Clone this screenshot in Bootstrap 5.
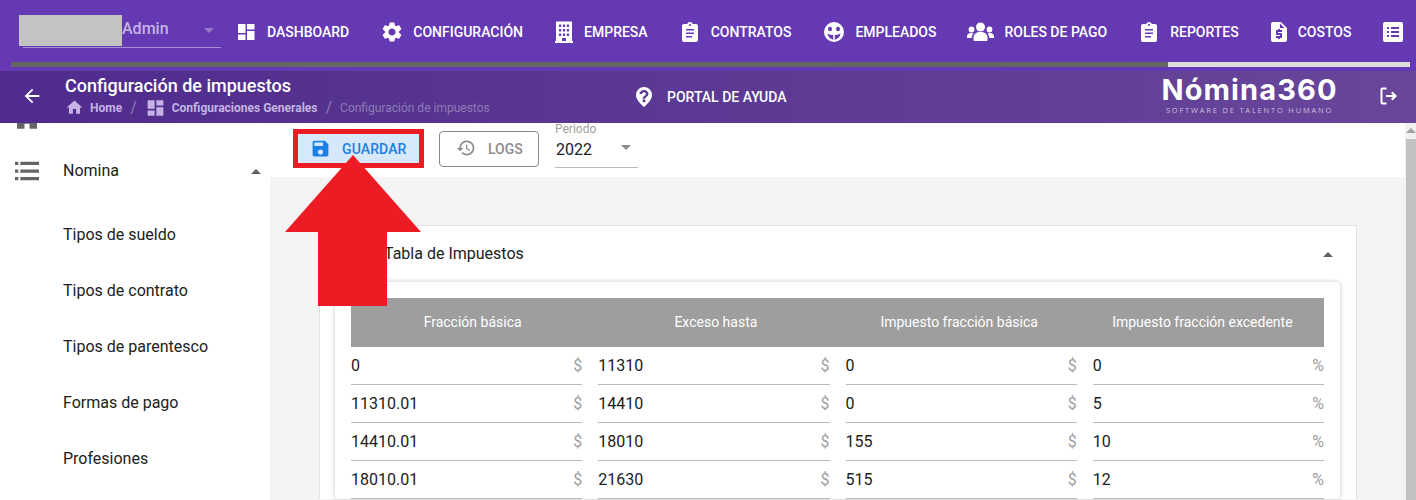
<!DOCTYPE html>
<html lang="es">
<head>
<meta charset="utf-8">
<title>Configuración de impuestos</title>
<link href="https://cdn.jsdelivr.net/npm/bootstrap@5.3.0/dist/css/bootstrap.min.css" rel="stylesheet">
<style>
html,body{height:500px;overflow:hidden;}
body{font-family:Roboto,"Liberation Sans",sans-serif;background:#f4f4f4;color:#212121;width:1416px;}
svg{display:block;flex:none;fill:currentColor;}
.top{background:#6539b3;height:71px;color:#fff;}
.top-row{height:62px;}
.user{width:198px;height:33px;margin:15px 0 0 23px;border-bottom:1px solid #a68fd6;color:#c4b3e4;font-size:16px;font-weight:500;}
.redact{width:103px;height:31px;background:#c3c3c3;margin-left:-4px;}
.user-name{line-height:28px;}
.caret{width:0;height:0;border-left:5px solid transparent;border-right:5px solid transparent;border-top:5px solid currentColor;}
.caret.up{border-top:0;border-bottom:5px solid currentColor;}
.user .caret{margin:13px 7px 0 auto;color:#9478cc;}
.menu{margin-left:13px;margin-top:20px;gap:30px;font-size:14px;font-weight:500;line-height:20px;}
.menu-item{gap:9px;white-space:nowrap;}
.menu-item:nth-child(2){margin-left:1px;}
.menu-item:nth-child(3){margin-left:-1px;gap:8px;}
.menu-item:nth-child(5){margin-left:1px;}
.menu-item.tight{gap:7px;margin-left:-2px;}
.scroll-x{height:5px;margin:0 6px 0 11px;border-radius:0;background:#ddd;}
.scroll-x .progress-bar{background:#666;}
.sub{height:52px;background:linear-gradient(90deg,#4f2c8d,#68469a);color:#fff;}
.back{width:65px;padding-left:21px;margin-bottom:2px;}
.sub-title{width:571px;align-self:flex-start;}
.sub-title h1{font-size:18px;font-weight:500;line-height:22px;margin:4px 0 1px;}
.breadcrumb{--bs-breadcrumb-margin-bottom:0;--bs-breadcrumb-divider-color:#8f7bb5;--bs-breadcrumb-item-active-color:#8f7bb5;--bs-breadcrumb-item-padding-x:8px;font-size:12px;line-height:18px;font-weight:700;}
.breadcrumb-item{display:flex;align-items:center;}
.breadcrumb a{color:#c4b3e4;text-decoration:none;gap:6px;}
.breadcrumb-item+.breadcrumb-item::before{font-size:16px;font-weight:400;line-height:18px;}
.breadcrumb .active{font-weight:400;}
.help{width:524px;gap:13px;font-size:14px;font-weight:500;margin-left:-2px;margin-right:2px;}
.logo{width:179px;text-align:center;line-height:1;margin-top:-3px;}
.logo b{display:block;font-family:Inter,sans-serif;font-size:29px;font-weight:700;letter-spacing:1.1px;line-height:28px;white-space:nowrap;}
.logo span{display:block;font-size:7.5px;letter-spacing:1.8px;line-height:10px;margin-top:1px;color:#c9bfdc;font-family:"Open Sans",sans-serif;white-space:nowrap;}
.logout{margin-left:37px;margin-bottom:2px;}
.main{height:377px;overflow:hidden;}
.side{width:270px;background:#fff;flex:none;overflow:hidden;font-size:16px;}
.side-list{margin-top:-36px;}
.side-row{height:56px;padding-left:63px;}
.side-ico{width:48px;margin-left:-60px;margin-right:12px;color:#666;}
.side-row .caret{margin-left:auto;margin-right:9px;color:#616161;}
.sub-list{padding-top:8px;}
.content{width:1135px;flex:none;}
.toolbar{height:54px;background:#fff;padding-left:23px;}
.btn-save{width:131px;height:39px;margin-top:6px;border:5px solid #ed1c24;background:#d6e8fa;color:#1a80e5;border-radius:0;padding:1px 0 0 12px;font-size:14px;font-weight:500;gap:11px;letter-spacing:.1px;}
.btn-save svg{margin-top:-2px;}
.btn-logs{width:100px;height:36px;margin:8px 0 0 15px;border:1px solid #8a8a8a;border-radius:4px;color:#8c8c8c;padding:1px 0 0 16px;gap:12px;font-size:14px;font-weight:500;}
.btn-logs svg{margin-top:-3px;}
.periodo{width:83px;height:45px;margin-left:16px;border-bottom:1px solid #bbb;}
.periodo small{display:block;font-size:12px;line-height:12px;color:#9e9e9e;}
.periodo .val{font-size:16px;line-height:26px;margin-top:2px;padding-left:1px;}
.periodo .caret{margin:-18px 7px 0 auto;color:#8a8a8a;}
.area{padding:48px 48px 0 49px;}
.panel{border:1px solid #e3e3e3;border-bottom:0;border-radius:0;background:#fff;}
.panel-head{height:56px;padding:0 23px 0 64px;font-size:16px;}
.panel-head .caret{color:#616161;}
.inner{margin:0 16px 0 15px;padding:16px 16px 0;border-radius:4px;background:#fff;box-shadow:0 0 5px rgba(0,0,0,.22);}
.thead{background:#9e9e9e;color:#fff;height:49px;font-size:14px;text-align:center;}
.cell{height:38px;border-bottom:1px solid #bbb;font-size:16px;padding-top:1px;}
.cell i{font-style:normal;color:#9e9e9e;}
.vbar{width:11px;flex:none;background:#f1f1f1;padding-top:5px;}
.vbar .caret{margin:0 auto 6px;color:#a3a3a3;}
.vbar div:last-child{height:100%;background:#c1c1c1;margin-left:.5px;}
.stage{position:relative;}
.arrow{position:absolute;left:285px;top:32px;fill:#ed1c24;}
</style>
</head>
<body>
<header class="top">
  <div class="top-row d-flex align-items-start">
    <div class="user d-flex flex-none">
      <div class="redact"></div><div class="user-name">Admin</div><div class="caret"></div>
    </div>
    <nav class="menu d-flex align-items-center">
      <a class="menu-item d-flex align-items-center text-white text-decoration-none" href="#"><svg width="24" height="24" viewBox="0 0 24 24"><path d="M4 13h7.500V4H4v9zm0 7h7.500v-5.500H4V20zm9 0h7.500V11H13v9zm0-16v5.500h7.500V4H13z"/></svg>DASHBOARD</a>
      <a class="menu-item d-flex align-items-center text-white text-decoration-none" href="#"><svg width="24" height="24" viewBox="0 0 24 24"><path d="M19.140 12.940c.04-.3.06-.61.06-.94 0-.32-.02-.64-.07-.94l2.030-1.580c.18-.14.23-.41.12-.61l-1.920-3.320c-.12-.22-.37-.29-.59-.22l-2.390.96c-.5-.38-1.030-.7-1.620-.94l-.36-2.540c-.04-.24-.24-.41-.48-.41h-3.840c-.24 0-.43.17-.47.41l-.36 2.540c-.59.24-1.130.57-1.620.94l-2.390-.96c-.22-.08-.47 0-.59.22L2.740 8.870c-.12.21-.08.47.12.61l2.030 1.580c-.05.3-.09.63-.09.94s.02.64.07.94l-2.030 1.580c-.18.14-.23.41-.12.61l1.920 3.320c.12.22.37.29.59.22l2.390-.96c.5.38 1.030.7 1.620.94l.36 2.540c.05.24.24.41.48.41h3.840c.24 0 .44-.17.47-.41l.36-2.540c.59-.24 1.130-.56 1.620-.94l2.390.96c.22.08.47 0 .59-.22l1.920-3.320c.12-.22.07-.47-.12-.61l-2.010-1.580zM12 15.600c-1.980 0-3.600-1.620-3.600-3.600s1.620-3.600 3.600-3.600 3.600 1.620 3.600 3.600-1.620 3.600-3.600 3.600z"/></svg>CONFIGURACIÓN</a>
      <a class="menu-item d-flex align-items-center text-white text-decoration-none" href="#"><svg width="24" height="24" viewBox="0 0 24 24"><path fill-rule="evenodd" d="M4 1.500h16V21h1v2H3v-2h1V1.500zM7 4.500v2.500h2.200V4.500H7zm3.900 0v2.500h2.200V4.500h-2.200zm3.900 0v2.500H17V4.500h-2.200zM7 9v2.500h2.200V9H7zm3.900 0v2.500h2.200V9h-2.200zm3.900 0v2.500H17V9h-2.200zM7 13.500V16h2.200v-2.500H7zm3.900 0V16h2.200v-2.500h-2.200zm3.900 0V16H17v-2.500h-2.200zM10 18v3h4v-3h-4z"/></svg>EMPRESA</a>
      <a class="menu-item d-flex align-items-center text-white text-decoration-none" href="#"><svg width="24" height="24" viewBox="0 0 24 24"><path fill-rule="evenodd" d="M6 4h3.200C9.600 2.800 10.700 2 12 2s2.400.8 2.800 2H18c1.100 0 2 .9 2 2v14c0 1.100-.9 2-2 2H6c-1.100 0-2-.9-2-2V6c0-1.100.9-2 2-2zm6 0a1 1 0 1 0 0 2 1 1 0 0 0 0-2zM8 9v1.500h8V9H8zm0 3.500V14h8v-1.500H8zM8 16v1.500h6V16H8z"/></svg>CONTRATOS</a>
      <a class="menu-item d-flex align-items-center text-white text-decoration-none" href="#"><svg width="24" height="24" viewBox="0 0 24 24"><circle cx="12" cy="12" r="10"/><ellipse cx="8" cy="9" rx="2" ry="2.300" fill="#6539b3"/><ellipse cx="16" cy="9" rx="2" ry="2.300" fill="#6539b3"/><path d="M5.500 13.500c2 1.200 4.200 1.600 6.500 1.600s4.500-.4 6.500-1.600c-.5 3.500-3.200 6-6.500 6s-6-2.500-6.500-6z" fill="#6539b3"/><path d="M11.200 15h1.600v4.500h-1.600z"/></svg>EMPLEADOS</a>
      <a class="menu-item d-flex align-items-center text-white text-decoration-none" href="#"><svg width="29" height="24" viewBox="-1 -2 29 24"><circle cx="13.500" cy="5" r="4.500"/><path d="M6.500 18v-2.500c0-3.500 3-5.500 7-5.500s7 2 7 5.500V18c0 .6-.4 1-1 1h-12c-.6 0-1-.4-1-1z"/><circle cx="4.500" cy="7.500" r="2.900"/><circle cx="22.500" cy="7.500" r="2.900"/><path d="M0 16v-1.500c0-2 1.500-3.500 4-3.500 1 0 1.800.2 2.500.6C5.300 13 4.700 14.500 4.700 16zM27 16v-1.500c0-2-1.500-3.500-4-3.500-1 0-1.800.2-2.500.6 1.200 1.400 1.800 2.900 1.800 4.400z"/></svg>ROLES DE PAGO</a>
      <a class="menu-item d-flex align-items-center text-white text-decoration-none" href="#"><svg width="24" height="24" viewBox="0 0 24 24"><path fill-rule="evenodd" d="M6 4h3.200C9.600 2.800 10.700 2 12 2s2.400.8 2.800 2H18c1.100 0 2 .9 2 2v14c0 1.100-.9 2-2 2H6c-1.100 0-2-.9-2-2V6c0-1.100.9-2 2-2zm6 0a1 1 0 1 0 0 2 1 1 0 0 0 0-2zM8 9v1.500h8V9H8zm0 3.500V14h8v-1.500H8zM8 16v1.500h6V16H8z"/></svg>REPORTES</a>
      <a class="menu-item tight d-flex align-items-center text-white text-decoration-none" href="#"><svg width="24" height="24" viewBox="0 0 24 24"><path d="M14 2H6c-1.100 0-1.990.9-1.990 2L4 20c0 1.100.89 2 1.990 2H18c1.100 0 2-.9 2-2V8l-6-6zm1 10h-4v1h3c.55 0 1 .45 1 1v3c0 .55-.45 1-1 1h-1v1h-2v-1H9v-2h4v-1h-3c-.55 0-1-.45-1-1v-3c0-.55.45-1 1-1h1V9h2v1h2v2zm-2-4V3.500L17.500 8H13z"/></svg>COSTOS</a>
      <a class="menu-item d-flex align-items-center text-white text-decoration-none" href="#"><svg width="24" height="24" viewBox="0 0 24 24"><path fill-rule="evenodd" d="M4 2h16c1.100 0 2 .9 2 2v16c0 1.100-.9 2-2 2H4c-1.100 0-2-.9-2-2V4c0-1.100.9-2 2-2zm2 5v2h2V7H6zm4 0v2h8V7h-8zm-4 4v2h2v-2H6zm4 0v2h8v-2h-8zm-4 4v2h2v-2H6zm4 0v2h8v-2h-8z"/></svg></a>
    </nav>
  </div>
  <div class="progress scroll-x"><div class="progress-bar" style="width:82.7%"></div></div>
</header>

<section class="sub d-flex align-items-center">
  <div class="back"><svg width="22" height="22" viewBox="0 0 24 24"><path d="M20 11H7.830l5.590-5.590L12 4l-8 8 8 8 1.410-1.410L7.830 13H20v-2z"/></svg></div>
  <div class="sub-title">
    <h1>Configuración de impuestos</h1>
    <ol class="breadcrumb">
      <li class="breadcrumb-item"><a class="d-inline-flex align-items-center" href="#"><svg width="19" height="19" viewBox="0 0 24 24"><path d="M10 20v-6h4v6h5v-8h3L12 3 2 12h3v8z"/></svg>Home</a></li>
      <li class="breadcrumb-item"><a class="d-inline-flex align-items-center" href="#"><svg width="21" height="18" viewBox="0 1.700 24 20.600"><path d="M3 13h8V3H3v10zm0 8h8v-6H3v6zm10 0h8V11h-8v10zm0-18v6h8V3h-8z"/></svg>Configuraciones Generales</a></li>
      <li class="breadcrumb-item active">Configuración de impuestos</li>
    </ol>
  </div>
  <div class="help d-flex align-items-center"><svg width="20" height="20" viewBox="2 2 20 20"><path fill-rule="evenodd" d="M12 2a8 8 0 0 1 8 8c0 4.500-4 8.500-8 12-4-3.500-8-7.500-8-12a8 8 0 0 1 8-8zm-1.300 12.600v2.600h2.600v-2.600h-2.600zM12 5c-2.500 0-4.400 1.700-4.600 4h2.500c.2-1 1-1.700 2.100-1.700s1.900.7 1.900 1.700c0 1.800-3.200 1.900-3.200 4.800h2.600c0-2 3.200-2.500 3.200-4.800C16.500 6.700 14.500 5 12 5z"/></svg>PORTAL DE AYUDA</div>
  <div class="logo"><b>Nómina360</b><span>SOFTWARE DE TALENTO HUMANO</span></div>
  <div class="logout"><svg width="24" height="24" viewBox="0 0 24 24"><path d="M10.500 3.500H6.500C5.400 3.500 4.500 4.400 4.500 5.500v13c0 1.100.9 2 2 2h4v-2h-4v-13h4v-2zm6 4L15 9l2 2h-7v2h7l-2 2 1.500 1.500L21 12z"/></svg></div>
</section>

<div class="main d-flex stage">
  <aside class="side">
    <div class="side-list">
      <div class="side-row d-flex align-items-center"><div class="side-ico"><svg class="ms-auto me-auto" width="30" height="30" viewBox="0 0 24 24"><path d="M4 2h16v21h-6v-4h-4v4H4z"/></svg></div></div>
      <div class="side-row d-flex align-items-center"><div class="side-ico"><svg class="ms-auto me-auto" width="32" height="32" viewBox="0 0 24 24"><path d="M3 5h2.500v2.500H3zM7 5h14v2.500H7zM3 10.800h2.500v2.500H3zM7 10.800h14v2.500H7zM3 16.500h2.500V19H3zM7 16.500h14V19H7z"/></svg></div>Nomina<div class="caret up"></div></div>
      <div class="sub-list">
        <div class="side-row d-flex align-items-center">Tipos de sueldo</div>
        <div class="side-row d-flex align-items-center">Tipos de contrato</div>
        <div class="side-row d-flex align-items-center">Tipos de parentesco</div>
        <div class="side-row d-flex align-items-center">Formas de pago</div>
        <div class="side-row d-flex align-items-center">Profesiones</div>
      </div>
    </div>
  </aside>
  <main class="content">
    <div class="toolbar d-flex align-items-start">
      <button class="btn btn-save d-flex align-items-center" type="button"><svg width="21" height="21" viewBox="0 0 24 24"><path d="M17 3H5c-1.110 0-2 .9-2 2v14c0 1.100.89 2 2 2h14c1.100 0 2-.9 2-2V7l-4-4zm-5 16c-1.660 0-3-1.340-3-3s1.340-3 3-3 3 1.340 3 3-1.340 3-3 3zm3-10H5V5h10v4z"/></svg>GUARDAR</button>
      <button class="btn btn-logs d-flex align-items-center" type="button"><svg width="20" height="20" viewBox="0 0 24 24"><path d="M13 3c-4.970 0-9 4.030-9 9H1l3.890 3.890.07.14L9 12H6c0-3.870 3.130-7 7-7s7 3.130 7 7-3.130 7-7 7c-1.930 0-3.680-.79-4.940-2.060l-1.420 1.420C8.270 19.990 10.510 21 13 21c4.970 0 9-4.030 9-9s-4.030-9-9-9zm-1 5v5l4.250 2.520.77-1.280-3.520-2.090V8z"/></svg>LOGS</button>
      <div class="periodo"><small>Periodo</small><div class="val">2022</div><div class="caret"></div></div>
    </div>
    <div class="area">
      <div class="card panel">
        <div class="panel-head d-flex align-items-center justify-content-between">Tabla de Impuestos<div class="caret up"></div></div>
        <div class="inner">
          <div class="row g-0 thead align-items-center">
            <div class="col-3">Fracción básica</div><div class="col-3">Exceso hasta</div><div class="col-3">Impuesto fracción básica</div><div class="col-3">Impuesto fracción excedente</div>
          </div>
          <div class="row gx-3">
            <div class="col-3"><div class="cell d-flex align-items-center justify-content-between">0<i>$</i></div></div>
            <div class="col-3"><div class="cell d-flex align-items-center justify-content-between">11310<i>$</i></div></div>
            <div class="col-3"><div class="cell d-flex align-items-center justify-content-between">0<i>$</i></div></div>
            <div class="col-3"><div class="cell d-flex align-items-center justify-content-between">0<i>%</i></div></div>
            <div class="col-3"><div class="cell d-flex align-items-center justify-content-between">11310.01<i>$</i></div></div>
            <div class="col-3"><div class="cell d-flex align-items-center justify-content-between">14410<i>$</i></div></div>
            <div class="col-3"><div class="cell d-flex align-items-center justify-content-between">0<i>$</i></div></div>
            <div class="col-3"><div class="cell d-flex align-items-center justify-content-between">5<i>%</i></div></div>
            <div class="col-3"><div class="cell d-flex align-items-center justify-content-between">14410.01<i>$</i></div></div>
            <div class="col-3"><div class="cell d-flex align-items-center justify-content-between">18010<i>$</i></div></div>
            <div class="col-3"><div class="cell d-flex align-items-center justify-content-between">155<i>$</i></div></div>
            <div class="col-3"><div class="cell d-flex align-items-center justify-content-between">10<i>%</i></div></div>
            <div class="col-3"><div class="cell d-flex align-items-center justify-content-between">18010.01<i>$</i></div></div>
            <div class="col-3"><div class="cell d-flex align-items-center justify-content-between">21630<i>$</i></div></div>
            <div class="col-3"><div class="cell d-flex align-items-center justify-content-between">515<i>$</i></div></div>
            <div class="col-3"><div class="cell d-flex align-items-center justify-content-between">12<i>%</i></div></div>
          </div>
        </div>
      </div>
    </div>
  </main>
  <div class="vbar ms-auto"><div class="caret up"></div><div></div></div>
  <svg class="arrow" width="136" height="151" viewBox="0 0 136 151"><path d="M68 0l68 77H102v74H33V77H0z"/></svg>
</div>
<script src="https://cdn.jsdelivr.net/npm/bootstrap@5.3.0/dist/js/bootstrap.bundle.min.js"></script>
</body>
</html>
